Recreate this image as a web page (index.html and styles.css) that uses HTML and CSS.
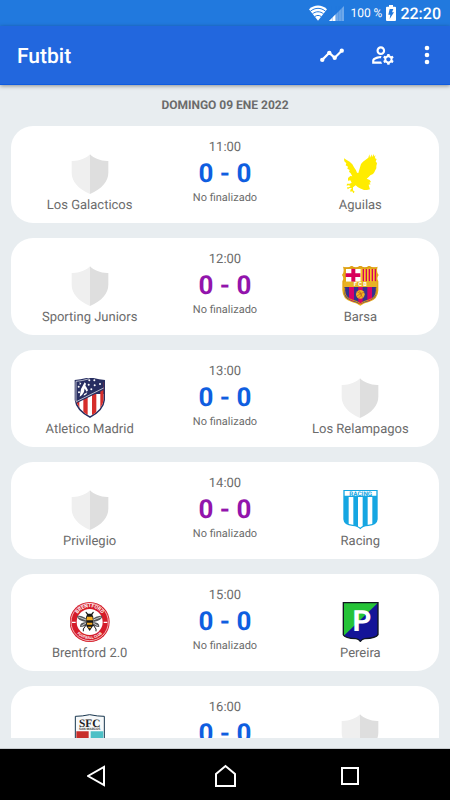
FILE: index.html
```html
<!DOCTYPE html>
<html lang="es">
<head>
<meta charset="utf-8">
<meta name="viewport" content="width=device-width, initial-scale=1">
<title>Futbit</title>
<link rel="stylesheet" href="styles.css">
</head>
<body>
<svg class="defs" aria-hidden="true">
  <symbol id="shield" viewBox="0 0 120 120">
    <path fill="#efefef" d="M60 1C48 13 27 22 5 21V56C5 82 25 105 60 120Z"/>
    <path fill="#dedede" d="M60 1C72 13 93 22 115 21V56C115 82 95 105 60 120Z"/>
  </symbol>
</svg>

<div class="status-bar">
  <svg class="wifi" viewBox="0 0 54 48" aria-hidden="true">
    <path fill="#fff" d="M27 47L0 13C16-2 38-2 54 13Z"/>
    <path fill="none" stroke="#2179de" stroke-width="3" d="M4 19C18 7 36 7 50 19M10 27C20 18 34 18 44 27M17 35C23 30 31 30 37 35"/>
  </svg>
  <svg class="signal" viewBox="0 0 45 45" aria-hidden="true">
    <path fill="#6ea8ea" d="M45 0V45H0Z"/>
    <path fill="#fff" d="M20 25V45H0Z"/>
    <path stroke="#2179de" stroke-width="1" d="M10 0V45M20 0V45M29 0V45M37 0V45"/>
  </svg>
  <span class="percent">100 %</span>
  <svg class="battery" viewBox="0 0 30 48" aria-hidden="true">
    <path fill="#fff" d="M9 0H21V5H27Q30 5 30 8V45Q30 48 27 48H3Q0 48 0 45V8Q0 5 3 5H9Z"/>
    <path fill="#2179de" d="M11 12H22L18 22H24L11 42L13 29H7Z"/>
  </svg>
  <span class="clock">22:20</span>
</div>

<header class="app-bar">
  <h1>Futbit</h1>
  <button type="button" aria-label="Estadísticas">
    <svg viewBox="0 0 24 24"><path fill="none" stroke="#fff" stroke-width="2" d="M3 16.500L9.500 10L14.500 14.500L21 8"/><g fill="#fff"><circle cx="3" cy="16.500" r="2"/><circle cx="9.500" cy="10" r="2"/><circle cx="14.500" cy="14.500" r="2"/><circle cx="21" cy="8" r="2"/></g></svg>
  </button>
  <button type="button" aria-label="Administrar cuenta">
    <svg viewBox="0 0 24 24"><path fill="#fff" d="M4 18v-.65c0-.34.16-.66.41-.81C6.100 15.530 8.030 15 10 15c.030 0 .050 0 .080.010.1-.7.300-1.370.590-1.980-.220-.020-.440-.030-.670-.030-2.420 0-4.680.670-6.610 1.820-.880.520-1.390 1.500-1.390 2.530V20h9.260c-.42-.6-.75-1.280-.97-2H4zM10 12c2.210 0 4-1.790 4-4s-1.790-4-4-4-4 1.790-4 4 1.790 4 4 4zm0-6c1.100 0 2 .9 2 2s-.9 2-2 2-2-.9-2-2 .9-2 2-2zM20.750 16c0-.22-.03-.42-.06-.63l1.140-1.010-1-1.730-1.450.490c-.32-.27-.68-.48-1.080-.63L18 11h-2l-.3 1.490c-.4.150-.76.360-1.080.630l-1.450-.49-1 1.730 1.140 1.010c-.03.210-.06.410-.06.630s.03.420.06.630l-1.140 1.010 1 1.730 1.450-.49c.32.270.68.480 1.080.630L16 21h2l.3-1.490c.4-.15.76-.36 1.080-.63l1.450.49 1-1.730-1.140-1.010c.03-.21.06-.41.06-.63zM17 18c-1.100 0-2-.9-2-2s.9-2 2-2 2 .9 2 2-.9 2-2 2z"/></svg>
  </button>
  <button type="button" class="more" aria-label="Más opciones">
    <svg viewBox="0 0 24 24"><g fill="#fff"><circle cx="12" cy="5" r="2.300"/><circle cx="12" cy="12" r="2.300"/><circle cx="12" cy="19" r="2.300"/></g></svg>
  </button>
</header>

<main class="matches">
  <h2>DOMINGO 09 ENE 2022</h2>

  <article class="match">
    <div class="team"><svg class="crest"><use href="#shield"/></svg><span>Los Galacticos</span></div>
    <div class="result"><time>11:00</time><strong>0 - 0</strong><small>No finalizado</small></div>
    <div class="team">
      <svg class="crest" viewBox="31 30 120 120"><path fill="#ffec00" d="M43 43L51 48L60 53L68 61L73 70L79 79L82 86L86 87L88 80L91 70L94 60L100 53L108 47L116 41L119 31L121 41L126 31L127 40L132 30L133 38L137 33L136 43L141 45L138 52L142 58L140 66L140 73L136 80L134 85L130 90L122 94L117 99L111 104L120 108L124 114L119 116L123 121L117 122L119 130L121 136L112 138L103 138L94 134L85 130L78 124L70 130L70 139L75 143L71 148L68 142L62 143L62 137L67 133L60 132L54 136L52 130L58 130L63 126L57 124L51 125L52 119L60 119L66 116L62 109L55 110L55 102L62 96L68 97L63 88L58 83L60 78L53 74L55 68L48 64L50 58L44 52Z"/></svg>
      <span>Aguilas</span>
    </div>
  </article>

  <article class="match away-style">
    <div class="team"><svg class="crest"><use href="#shield"/></svg><span>Sporting Juniors</span></div>
    <div class="result"><time>12:00</time><strong>0 - 0</strong><small>No finalizado</small></div>
    <div class="team">
      <svg class="crest" viewBox="31 36 120 120">
        <clipPath id="barsa"><path d="M45 42Q58 45 66 38Q79 48 92 37Q105 48 118 38Q127 45 141 42Q137 54 143 63Q136 72 142 82V109Q142 134 117 141Q101 145 92 151Q82 145 67 141Q42 134 42 109V82Q48 72 41 63Q47 54 45 42Z"/></clipPath>
        <path fill="#e4a818" d="M40 38Q57 43 66 35Q79 45 92 34Q105 45 118 35Q129 43 144 38Q139 54 147 63Q140 72 146 82V109Q145 137 118 144Q101 148 92 155Q82 148 66 144Q39 137 38 109V82Q44 72 37 63Q45 54 40 38Z"/>
        <g clip-path="url(#barsa)">
          <path fill="#fff" d="M49 45H93V83H49Z"/><path fill="#d8005c" d="M65 44H77V58H92V69H77V83H65V69H48V58H65Z"/>
          <path fill="#f6c52a" d="M94 44H139V83H94Z"/><path stroke="#d8005c" stroke-width="4" d="M101 45V82M110 45V82M119 45V82M128 45V82M137 45V82"/>
          <path fill="#34318e" d="M44 99H140V150H44Z"/><path fill="#d6006c" d="M58 99H73V150H58ZM86 99H99V150H86ZM113 99H127V150H113Z"/>
          <path fill="#e8b225" d="M38 83H146V99H38Z"/>
        </g>
        <path fill="none" stroke="#d99c14" stroke-width="3" d="M45 42Q58 45 66 38Q79 48 92 37Q105 48 118 38Q127 45 141 42M45 101V110Q46 132 68 138Q84 142 92 149Q101 142 117 138Q139 132 140 110V101"/>
        <circle cx="92" cy="121" r="13" fill="#f0b323"/><path fill="none" stroke="#b6591e" stroke-width="2" d="M83 113L92 119L103 115M82 126L92 119L99 131M89 110L96 123L87 132"/>
        <text x="92" y="97" class="mark fcb">F C B</text>
      </svg>
      <span>Barsa</span>
    </div>
  </article>

  <article class="match">
    <div class="team">
      <svg class="crest" viewBox="28 27 120 120">
        <clipPath id="atletico"><path d="M46 36Q65 33 88 27Q110 33 129 36V92Q126 121 88 142Q50 121 46 92Z"/></clipPath>
        <path fill="#272e61" d="M42 33Q65 31 88 24Q110 31 133 33V93Q130 125 88 147Q45 125 42 93Z"/>
        <g clip-path="url(#atletico)">
          <path fill="#fff" d="M40 75H134V145H40Z"/>
          <path fill="#d52d2b" d="M43 75H56V145H43ZM68 75H81V145H68ZM94 75H107V145H94ZM119 40H132V145H119Z"/>
          <path fill="#272e61" d="M40 20H136V59L43 105Z"/>
        </g>
        <path fill="none" stroke="#fff" stroke-width="2" d="M46 97V37Q65 36 86 29M47 98L129 57"/>
        <path fill="#fff" d="M57 39L62 44L57 48ZM61 60L72 40L76 44L72 57Q72 70 64 78L57 83ZM75 50L82 64L78 68L71 57ZM70 75L80 70L77 76L69 80Z"/>
        <g fill="#fff"><circle cx="86" cy="34" r="3"/><circle cx="101" cy="34" r="3"/><circle cx="84" cy="47" r="3"/><circle cx="102" cy="49" r="3"/><circle cx="118" cy="45" r="3"/><circle cx="92" cy="61" r="3"/><circle cx="54" cy="53" r="3"/><circle cx="55" cy="70" r="3"/></g>
      </svg>
      <span>Atletico Madrid</span>
    </div>
    <div class="result"><time>13:00</time><strong>0 - 0</strong><small>No finalizado</small></div>
    <div class="team"><svg class="crest"><use href="#shield"/></svg><span>Los Relampagos</span></div>
  </article>

  <article class="match away-style">
    <div class="team"><svg class="crest"><use href="#shield"/></svg><span>Privilegio</span></div>
    <div class="result"><time>14:00</time><strong>0 - 0</strong><small>No finalizado</small></div>
    <div class="team">
      <svg class="crest" viewBox="31 33 120 120">
        <clipPath id="racing"><path d="M43 50H142V121Q142 136 116 137Q99 138 92 146Q84 138 69 137Q43 136 43 121Z"/></clipPath>
        <path fill="#15a6e2" d="M41 33H144V121Q143 139 116 141Q99 142 92 151Q84 142 69 141Q42 139 41 121Z"/>
        <path fill="#fff" d="M45 36H140V50H45Z"/>
        <path clip-path="url(#racing)" fill="#fff" d="M57 54H71V150H57ZM85 54H99V150H85ZM114 54H128V150H114Z"/>
        <text x="93" y="50" class="mark racing">RACING</text>
      </svg>
      <span>Racing</span>
    </div>
  </article>

  <article class="match">
    <div class="team">
      <svg class="crest" viewBox="28 31 120 120">
        <circle cx="87" cy="91" r="60" fill="#d51c29"/><circle cx="87" cy="91" r="56" fill="none" stroke="#fff" stroke-width="2"/><circle cx="87" cy="91" r="39" fill="#fff"/>
        <path id="arc-top" fill="none" d="M43 91A44 44 0 0 1 131 91"/><path id="arc-bottom" fill="none" d="M36 91A51 51 0 0 0 138 91"/>
        <text class="mark ring"><textPath href="#arc-top" startOffset="50%">BRENTFORD</textPath></text>
        <text class="mark ring small"><textPath href="#arc-bottom" startOffset="50%">FOOTBALL CLUB</textPath></text>
        <path fill="#fff" d="M34 90H45V94H34ZM129 90H140V94H129Z"/>
        <path fill="#55575a" d="M80 83Q63 69 49 73Q50 87 75 91ZM94 83Q110 69 125 73Q124 87 99 91ZM77 91Q57 92 58 105Q68 110 80 96ZM97 91Q117 92 116 105Q106 110 94 96Z"/>
        <path stroke="#fff" stroke-width="2" d="M53 76L79 86M121 76L95 86M62 103L78 93M112 103L96 93"/>
        <path fill="#171717" d="M79 69L74 61L77 60L82 66H92L97 60L100 61L95 69L98 76L97 103L87 118L77 103L76 76Z"/>
        <path fill="#f4ac22" d="M79 75H95L97 86H77ZM79 93H95V99H79ZM82 105H92L90 110H84Z"/>
        <path fill="none" stroke="#171717" stroke-width="3" d="M77 99L68 112V119M97 99L106 112V119"/>
      </svg>
      <span>Brentford 2.0</span>
    </div>
    <div class="result"><time>15:00</time><strong>0 - 0</strong><small>No finalizado</small></div>
    <div class="team">
      <svg class="crest" viewBox="31 30 120 120">
        <path fill="#141498" d="M41 32H145V128Q139 139 105 140Q97 141 92 148Q87 141 79 140Q46 139 41 128Z"/>
        <path fill="#25c338" d="M41 32H145L41 133Z"/>
        <path fill="none" stroke="#111720" stroke-width="4" d="M41 32H145V128Q139 139 105 140Q97 141 92 148Q87 141 79 140Q46 139 41 128Z"/>
        <text x="97" y="117" class="mark pereira">P</text>
      </svg>
      <span>Pereira</span>
    </div>
  </article>

  <article class="match">
    <div class="team">
      <svg class="crest" viewBox="28 33 120 120">
        <path fill="#f7f9fa" stroke="#17354d" stroke-width="3" d="M44 40Q64 40 87 35Q111 40 131 40V122Q123 142 87 150Q51 142 44 122Z"/>
        <path fill="#c82e2a" d="M47 85H84V145Q47 139 47 120Z"/><path fill="#4cc0c6" d="M90 85H128V120Q124 139 90 145Z"/>
        <text x="87" y="71" class="mark sfc">SFC</text><text x="87" y="82" class="mark san">SAN MARCOS</text>
      </svg>
    </div>
    <div class="result"><time>16:00</time><strong>0 - 0</strong></div>
    <div class="team"><svg class="crest"><use href="#shield"/></svg></div>
  </article>
</main>

<nav class="system-nav" aria-label="Sistema">
  <button type="button" aria-label="Atrás"><svg viewBox="0 0 24 24"><path d="M17 4V22L1 13Z"/></svg></button>
  <button type="button" aria-label="Inicio"><svg viewBox="0 0 24 24"><path d="M3 23V11L12.500 3L22 11V23Z"/></svg></button>
  <button type="button" aria-label="Recientes"><svg viewBox="0 0 24 24"><path d="M3 5H19V21H3Z"/></svg></button>
</nav>
</body>
</html>
```
FILE: styles.css
```css
* { box-sizing: border-box; }

body {
  margin: 0;
  height: 100vh;
  display: flex;
  flex-direction: column;
  overflow: hidden;
  background: #e8edf0;
  color: #6b6b6b;
  font-family: Roboto, "Liberation Sans", sans-serif;
  text-rendering: geometricPrecision;
}

.defs { display: none; }

button {
  border: 0;
  padding: 0;
  background: none;
  display: grid;
  place-items: center;
}

.status-bar {
  flex: none;
  height: 26px;
  padding: 0 9px;
  display: flex;
  align-items: center;
  justify-content: flex-end;
  background: #2179de;
  color: #fff;
}

.wifi { width: 18px; height: 16px; margin-right: 2px; }
.signal { width: 15px; height: 15px; margin-right: 6px; }
.percent { font-size: 12px; }
.battery { width: 10px; height: 16px; margin: 0 4px; }
.clock { font-size: 16px; font-weight: 500; }

.app-bar {
  flex: none;
  height: 59px;
  padding: 0 11px 0 17px;
  display: flex;
  align-items: center;
  background: #2267de;
  border-bottom: 1px solid #0e5be0;
  box-shadow: 0 1px 4px rgba(0, 0, 0, 0.4);
  color: #fff;
}

.app-bar h1 {
  flex: 1;
  margin: 0;
  padding-top: 3px;
  font-size: 21px;
  font-weight: 500;
}

.app-bar button { width: 51px; height: 48px; }
.app-bar svg { width: 26px; height: 26px; }
.app-bar .more { width: 38px; margin-right: -7px; }
.app-bar .more svg { width: 24px; height: 24px; }

.matches {
  flex: 1;
  min-height: 0;
  overflow: hidden;
  margin-bottom: 10px;
  padding: 0 11px;
}

.matches h2 {
  margin: 0;
  font-size: 12px;
  font-weight: 700;
  line-height: 41px;
  text-align: center;
}

.match {
  height: 97px;
  margin-bottom: 15px;
  padding: 0 11px;
  display: grid;
  grid-template-columns: repeat(3, 1fr);
  border-radius: 22px;
  background: #fff;
}

.team, .result {
  display: flex;
  flex-direction: column;
  align-items: center;
}

.team { padding-top: 28px; font-size: 13px; line-height: 23px; }
.crest { width: 40px; height: 40px; }
.result { padding-top: 13px; }
.result time { font-size: 13px; line-height: 17px; }
.result strong { font-size: 26px; line-height: 37px; color: #0f5ee0; }
.result small { font-size: 11px; line-height: 10px; }
.away-style strong { color: #9214ac; }

.mark { text-anchor: middle; font-family: Roboto, sans-serif; font-weight: 700; fill: #fff; }
.fcb { font-size: 17px; }
.racing { font-size: 19px; fill: #15a6e2; }
.ring { font-size: 15px; }
.ring.small { font-size: 11px; }
.pereira { font-size: 88px; }
.sfc { font-family: "Liberation Serif", serif; font-size: 34px; fill: #222; }
.san { font-size: 10px; fill: #444; }

.system-nav {
  flex: none;
  height: 52px;
  padding: 0 36px;
  display: grid;
  grid-template-columns: repeat(3, 1fr);
  background: #000;
  border-top: 1px solid #c8cccf;
}

.system-nav svg { width: 24px; height: 24px; }
.system-nav path { fill: none; stroke: #fff; stroke-width: 2; }
```
